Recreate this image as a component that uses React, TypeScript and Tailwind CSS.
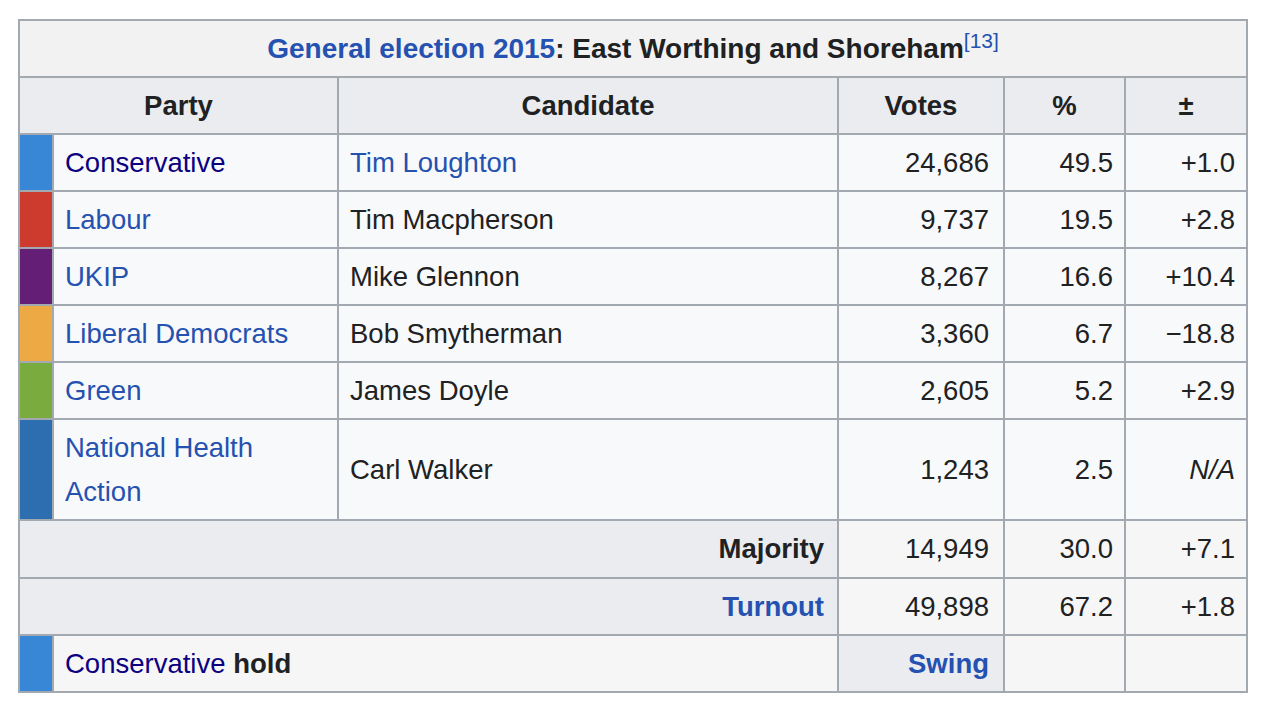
import React from 'react';

interface Row {
  color: string;
  party: string;
  partyLink?: boolean;
  candidate: string;
  candidateLink?: boolean;
  votes: string;
  pct: string;
  change: string;
  italic?: boolean;
}

const rows: Row[] = [
  { color: 'bg-[#3886d6]', party: 'Conservative', candidate: 'Tim Loughton', candidateLink: true, votes: '24,686', pct: '49.5', change: '+1.0' },
  { color: 'bg-[#cc3b2e]', party: 'Labour', partyLink: true, candidate: 'Tim Macpherson', votes: '9,737', pct: '19.5', change: '+2.8' },
  { color: 'bg-[#641e76]', party: 'UKIP', partyLink: true, candidate: 'Mike Glennon', votes: '8,267', pct: '16.6', change: '+10.4' },
  { color: 'bg-[#eca944]', party: 'Liberal Democrats', partyLink: true, candidate: 'Bob Smytherman', votes: '3,360', pct: '6.7', change: '\u221218.8' },
  { color: 'bg-[#7aab3f]', party: 'Green', partyLink: true, candidate: 'James Doyle', votes: '2,605', pct: '5.2', change: '+2.9' },
  { color: 'bg-[#2c6eaf]', party: 'National Health Action', partyLink: true, candidate: 'Carl Walker', votes: '1,243', pct: '2.5', change: 'N/A', italic: true },
];

const border = 'border-2 border-[#a2a9b1]';
const cell = `${border} px-[11px] py-[5.5px]`;
const votesCell = `${border} pl-[11px] pr-[14px] py-[5.5px] text-right`;
const link = 'text-[#2551b0]';
const visited = 'text-[#0b0080]';

export default function App() {
  return (
    <div className="min-h-screen bg-white pl-[18px] pt-[19px] font-[Liberation_Sans,Arial,sans-serif] text-[27.5px] leading-[44px] text-[#202122]">
      <table className="table-fixed border-collapse w-[1230px]">
        <colgroup>
          <col className="w-[34px]" />
          <col className="w-[285px]" />
          <col className="w-[500px]" />
          <col className="w-[166px]" />
          <col className="w-[121px]" />
          <col className="w-[122px]" />
        </colgroup>
        <tbody>
          <tr>
            <th colSpan={6} className={`${cell} bg-[#f2f2f2] font-bold text-center text-[28px]`}>
              <span className={link}>General election 2015</span>: East Worthing and Shoreham
              <sup className={`${link} font-normal text-[21px] relative -top-[10px]`}>[13]</sup>
            </th>
          </tr>
          <tr className="bg-[#eaecf0] font-bold">
            <th colSpan={2} className={`${cell} text-center`}>Party</th>
            <th className={`${cell} text-center`}>Candidate</th>
            <th className={`${cell} text-center`}>Votes</th>
            <th className={`${cell} text-center`}>%</th>
            <th className={`${cell} text-center`}>±</th>
          </tr>
          {rows.map((r) => (
            <tr key={r.party} className="bg-[#f8f9fa]">
              <td className={`${border} p-0 ${r.color}`}></td>
              <td className={`${cell} ${r.partyLink ? link : visited}`}>{r.party}</td>
              <td className={`${cell} ${r.candidateLink ? link : ''}`}>{r.candidate}</td>
              <td className={votesCell}>{r.votes}</td>
              <td className={`${cell} text-right`}>{r.pct}</td>
              <td className={`${cell} text-right ${r.italic ? 'italic' : ''}`}>{r.change}</td>
            </tr>
          ))}
          <tr className="bg-[#f6f6f6]">
            <th colSpan={3} className={`${border} pl-[11px] pr-[13px] py-[6px] bg-[#eaecf0] text-right font-bold`}>Majority</th>
            <td className={votesCell}>14,949</td>
            <td className={`${cell} text-right`}>30.0</td>
            <td className={`${cell} text-right`}>+7.1</td>
          </tr>
          <tr className="bg-[#f6f6f6]">
            <th colSpan={3} className={`${border} pl-[11px] pr-[13px] py-[5.5px] bg-[#eaecf0] text-right font-bold ${link}`}>Turnout</th>
            <td className={votesCell}>49,898</td>
            <td className={`${cell} text-right`}>67.2</td>
            <td className={`${cell} text-right`}>+1.8</td>
          </tr>
          <tr className="bg-[#f6f6f6]">
            <td className={`${border} p-0 bg-[#3886d6]`}></td>
            <td colSpan={2} className={cell}>
              <span className={visited}>Conservative</span> <b>hold</b>
            </td>
            <th className={`${votesCell} bg-[#eaecf0] font-bold ${link}`}>Swing</th>
            <td className={cell}></td>
            <td className={cell}></td>
          </tr>
        </tbody>
      </table>
    </div>
  );
}
